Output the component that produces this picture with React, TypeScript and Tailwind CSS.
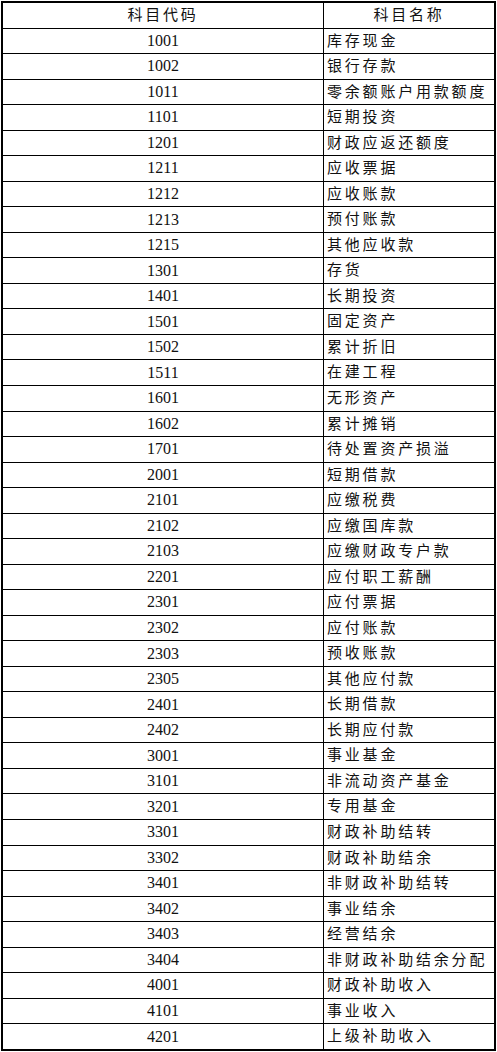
const rows: [string, string][] = [
  ["1001", "库存现金"],
  ["1002", "银行存款"],
  ["1011", "零余额账户用款额度"],
  ["1101", "短期投资"],
  ["1201", "财政应返还额度"],
  ["1211", "应收票据"],
  ["1212", "应收账款"],
  ["1213", "预付账款"],
  ["1215", "其他应收款"],
  ["1301", "存货"],
  ["1401", "长期投资"],
  ["1501", "固定资产"],
  ["1502", "累计折旧"],
  ["1511", "在建工程"],
  ["1601", "无形资产"],
  ["1602", "累计摊销"],
  ["1701", "待处置资产损溢"],
  ["2001", "短期借款"],
  ["2101", "应缴税费"],
  ["2102", "应缴国库款"],
  ["2103", "应缴财政专户款"],
  ["2201", "应付职工薪酬"],
  ["2301", "应付票据"],
  ["2302", "应付账款"],
  ["2303", "预收账款"],
  ["2305", "其他应付款"],
  ["2401", "长期借款"],
  ["2402", "长期应付款"],
  ["3001", "事业基金"],
  ["3101", "非流动资产基金"],
  ["3201", "专用基金"],
  ["3301", "财政补助结转"],
  ["3302", "财政补助结余"],
  ["3401", "非财政补助结转"],
  ["3402", "事业结余"],
  ["3403", "经营结余"],
  ["3404", "非财政补助结余分配"],
  ["4001", "财政补助收入"],
  ["4101", "事业收入"],
  ["4201", "上级补助收入"],
];

const font = "font-['Liberation_Serif','Noto_Sans_CJK_SC',serif]";

export default function App() {
  return (
    <div className={`h-[1052px] w-[497px] bg-white pl-[1px] pt-[1px] text-[#111] ${font}`}>
      <div className="flex h-[1050px] w-[495px] flex-col border-2 border-black">
        <div className="flex flex-1 border-b border-black">
          <div className="flex w-[321px] items-center justify-center border-r border-black text-[15px] tracking-[2.8px]">
            科目代码
          </div>
          <div className="flex flex-1 items-center justify-center text-[15px] tracking-[2.8px]">
            科目名称
          </div>
        </div>
        {rows.map(([code, name], i) => (
          <div
            key={code}
            className={`flex flex-1 ${i < rows.length - 1 ? "border-b border-black" : ""}`}
          >
            <div className="flex w-[321px] items-center justify-center border-r border-black text-[16px]">
              {code}
            </div>
            <div className="flex flex-1 items-center whitespace-nowrap pl-[3px] text-[15px] tracking-[2.8px]">
              {name}
            </div>
          </div>
        ))}
      </div>
    </div>
  );
}
